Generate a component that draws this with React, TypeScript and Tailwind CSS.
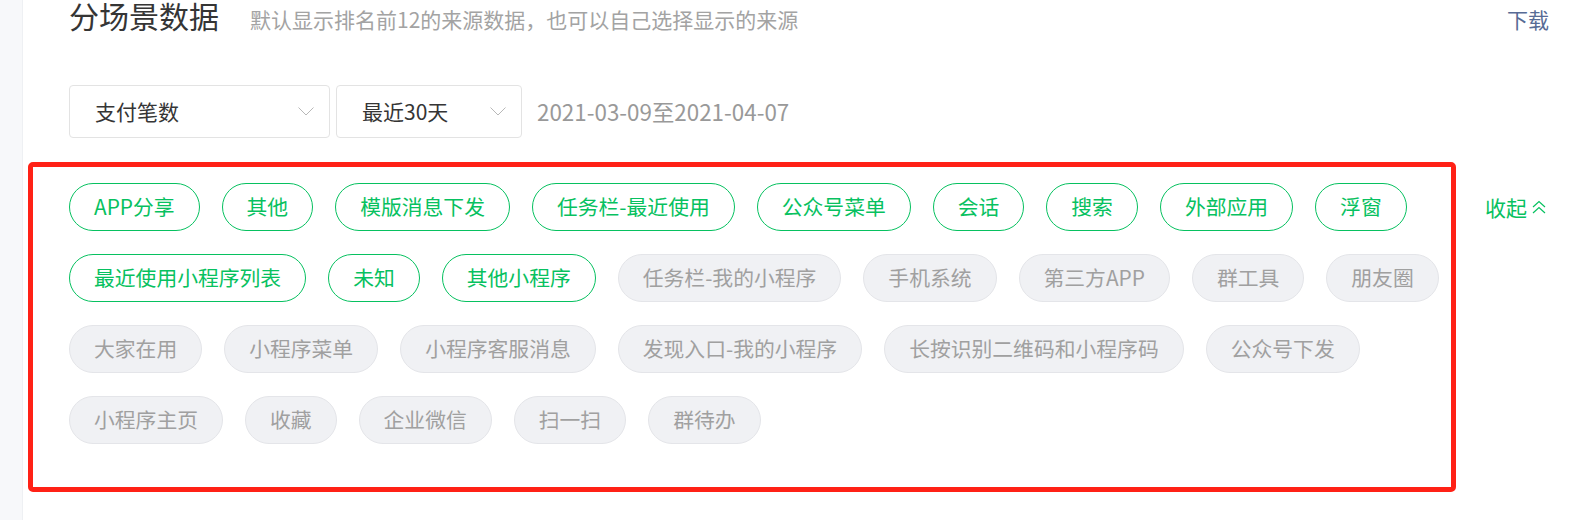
import React, { useState } from 'react';

const activeTags = [
  'APP分享', '其他', '模版消息下发', '任务栏-最近使用', '公众号菜单', '会话', '搜索',
  '外部应用', '浮窗', '最近使用小程序列表', '未知', '其他小程序',
];

const otherTags = [
  '任务栏-我的小程序', '手机系统', '第三方APP', '群工具', '朋友圈', '大家在用', '小程序菜单',
  '小程序客服消息', '发现入口-我的小程序', '长按识别二维码和小程序码', '公众号下发',
  '小程序主页', '收藏', '企业微信', '扫一扫', '群待办',
];

function Chevron() {
  return (
    <svg width="16" height="9" viewBox="0 0 16 9" fill="none">
      <polyline points="0.5,0.5 8,8 15.5,0.5" stroke="#b8b8b8" strokeWidth="1" />
    </svg>
  );
}

function Select({ label, width }: { label: string; width: string }) {
  return (
    <div className={`${width} h-[53px] flex items-center justify-between pl-[25px] pr-[15px] border border-[#e3e3e3] rounded-[4px] bg-white`}>
      <span className="text-[21px] text-[#353535] leading-none">{label}</span>
      <Chevron />
    </div>
  );
}

export default function App() {
  const [selected] = useState(activeTags);

  return (
    <div
      className="flex w-full h-[520px] bg-white overflow-hidden"
      style={{ fontFamily: '"Noto Sans CJK SC", "Noto Sans", sans-serif' }}
    >
      {/* side strip */}
      <div className="w-[23px] shrink-0 bg-[#f7f8fa] border-r border-[#eef0f3]" />

      <div className="flex-1 flex flex-col">
        {/* header */}
        <div className="flex items-baseline pl-[46px] pr-[43px] h-[40px]">
          <h1 className="text-[30px] leading-[31px] text-[#353535] font-normal">分场景数据</h1>
          <p className="ml-[31px] text-[21px] text-[#a3a3a3]">默认显示排名前12的来源数据，也可以自己选择显示的来源</p>
          <a className="ml-auto text-[21px] text-[#576b95] cursor-pointer">下载</a>
        </div>

        {/* filters */}
        <div className="flex items-center gap-[6px] pl-[46px] mt-[45px]">
          <Select label="支付笔数" width="w-[261px]" />
          <Select label="最近30天" width="w-[186px]" />
          <span className="ml-[9px] text-[22.4px] text-[#999999]">2021-03-09至2021-04-07</span>
        </div>

        {/* source tags */}
        <div className="flex items-start ml-[5px] mt-[24px]">
          <div className="w-[1428px] h-[330px] border-[5px] border-[#ff2116] rounded-[5px] pl-[36px] pr-[4px] pt-[16px]">
            <div className="flex flex-wrap gap-x-[22px] gap-y-[23px]">
              {selected.map((t) => (
                <span
                  key={t}
                  className="h-[48px] px-[24px] flex items-center rounded-full border border-[#07c160] text-[#07c160] text-[20.8px] whitespace-nowrap"
                >
                  {t}
                </span>
              ))}
              {otherTags.map((t) => (
                <span
                  key={t}
                  className="h-[48px] px-[24px] flex items-center rounded-full border border-[#e4e5e9] bg-[#f0f1f4] text-[#a0a0a0] text-[20.8px] whitespace-nowrap"
                >
                  {t}
                </span>
              ))}
            </div>
          </div>
          <button className="ml-[29px] mt-[31px] flex items-center gap-[5px] text-[21px] text-[#07c160] leading-[28px]">
            收起
            <svg width="14" height="14" viewBox="0 0 14 14" fill="none">
              <polyline points="1,7 7,1.5 13,7" stroke="#07c160" strokeWidth="1.2" />
              <polyline points="1,13 7,7.5 13,13" stroke="#07c160" strokeWidth="1.2" />
            </svg>
          </button>
        </div>
      </div>
    </div>
  );
}
